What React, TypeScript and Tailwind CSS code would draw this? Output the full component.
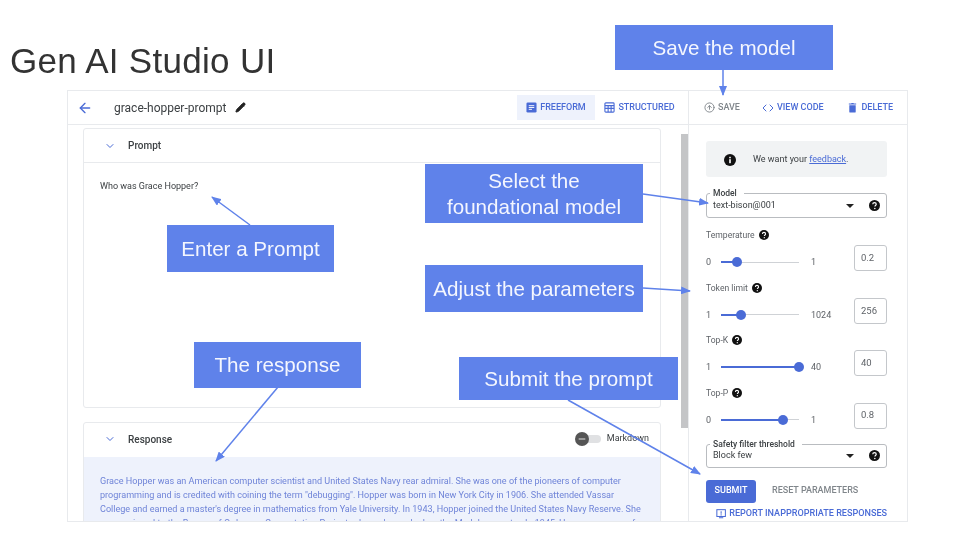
import { ArrowLeft, ChevronDown, Pencil, Code, CircleArrowUp, Minus } from "lucide-react";

const HelpIcon = ({ className = "", size = 11 }: { className?: string; size?: number }) => (
    <svg viewBox="0 0 24 24" width={size} height={size} className={className}>
        <circle cx="12" cy="12" r="12" fill="#111" />
        <path d="M8.2 9.4a3.8 3.8 0 0 1 7.6 0c0 2.6-3 2.6-3 5" fill="none" stroke="#fff" strokeWidth="2.6" />
        <circle cx="12.7" cy="18.4" r="1.6" fill="#fff" />
    </svg>
);

const InfoIcon = () => (
    <svg viewBox="0 0 24 24" width="12" height="12">
        <circle cx="12" cy="12" r="12" fill="#111" />
        <rect x="10.4" y="10.4" width="3.2" height="8" fill="#fff" />
        <rect x="10.4" y="5.6" width="3.2" height="3" fill="#fff" />
    </svg>
);

const FreeformIcon = () => (
    <svg viewBox="0 0 24 24" width="11" height="11">
        <rect x="1" y="1" width="22" height="22" rx="3" fill="#4a6bd6" />
        <path d="M6 8h12M6 12h12M6 16h7" stroke="#fff" strokeWidth="2" />
    </svg>
);

const TableIcon = () => (
    <svg viewBox="0 0 24 24" width="11" height="11" fill="none" stroke="#4a6bd6" strokeWidth="2.4">
        <rect x="2" y="2" width="20" height="20" rx="2" />
        <path d="M2 8h20M2 14h20M9 8v14M15.500 8v14" />
    </svg>
);

const TrashIcon = () => (
    <svg viewBox="0 0 24 24" width="11" height="11" fill="#4a6bd6">
        <path d="M5 7h14v14a2 2 0 0 1-2 2H7a2 2 0 0 1-2-2zM4 3h5l1-1h4l1 1h5v2.500H4z" />
    </svg>
);

const ReportIcon = () => (
    <svg viewBox="0 0 24 24" width="11" height="11" fill="none" stroke="#4a6bd6" strokeWidth="2.4">
        <rect x="2" y="3" width="20" height="16" />
        <path d="M12 6.500v6M12 14v2.500M7 22h10" />
    </svg>
);

const Caret = () => <div className="w-0 h-0 border-x-[4px] border-x-transparent border-t-[4px] border-t-[#222]" />;

const Param = ({ label, min, max, value, pct }: { label: string; min: string; max: string; value: string; pct: number }) => (
    <div className="flex flex-row items-end justify-between h-[52.4px]">
        <div className="flex flex-col gap-[15px] mb-[3px]">
            <div className="flex flex-row items-center gap-[4px] text-[8.6px] leading-[12px] text-[#5f6368]">
                {label}
                <HelpIcon size={10} />
            </div>
            <div className="flex flex-row items-center text-[9px] leading-[12px] text-[#5f6368]">
                <span className="w-[15px]">{min}</span>
                <div className="relative w-[78px] h-[1px] bg-[#cfd2d6]">
                    <div className="h-[2px] -mt-[0.5px] bg-[#4a6bd6]" style={{ width: `${pct}%` }} />
                    <div className="absolute -top-[4.5px] w-[10px] h-[10px] -ml-[5px] rounded-full bg-[#4a6bd6]" style={{ left: `${pct}%` }} />
                </div>
                <span className="ml-[12px]">{max}</span>
            </div>
        </div>
        <div className="w-[33px] h-[26px] flex items-center pl-[6px] border border-[#c4c7cb] rounded-[3px] text-[9.5px] text-[#5f6368]">
            {value}
        </div>
    </div>
);

const Select = ({ label, value, labelW, height }: { label: string; value: string; labelW: string; height: string }) => (
    <div className={`relative border border-[#b9bcc0] rounded-[3px] flex flex-row items-center pl-[6px] pr-[6px] text-[9px] text-[#3c4043] ${height}`}>
        <span className={`absolute -top-[6px] left-[3px] bg-white px-[3px] text-[8.5px] leading-[11px] font-medium text-[#3c4043] ${labelW}`}>{label}</span>
        <span className="flex-1">{value}</span>
        <Caret />
        <HelpIcon className="ml-[15px]" />
    </div>
);

const Callout = ({ className, children }: { className: string; children: React.ReactNode }) => (
    <div className={`absolute flex items-center justify-center text-center bg-[#5f82ea] text-[#f4f6fe] text-[20.6px] leading-[26px] font-['Liberation_Sans',sans-serif] ${className}`}>
        {children}
    </div>
);

const arrows = [
    { x1: 723, y1: 70, x2: 723, y2: 95 },
    { x1: 250, y1: 225, x2: 212, y2: 197 },
    { x1: 643, y1: 194, x2: 708, y2: 203 },
    { x1: 643, y1: 288, x2: 690, y2: 291 },
    { x1: 278, y1: 387, x2: 216, y2: 461 },
    { x1: 568, y1: 400, x2: 700, y2: 474 },
];

export default function App() {
    return (
        <div className="relative w-[960px] h-[540px] overflow-hidden bg-white blur-[0.35px] font-['Roboto',sans-serif]">
            <h1 className="pl-[10px] pt-[40px] h-[90px] text-[35px] leading-[42px] tracking-[0.3px] text-[#333] font-normal font-['Liberation_Sans',sans-serif]">Gen AI Studio UI</h1>

            <div className="ml-[67px] w-[841px] h-[432px] border border-[#e8eaed] flex flex-col overflow-hidden">
                {/* top bar */}
                <div className="h-[34px] shrink-0 flex flex-row border-b border-[#e8eaed]">
                    <div className="w-[621px] flex flex-row items-center pl-[9px] border-r border-[#e8eaed]">
                        <ArrowLeft size={16} className="text-[#4a6bd6]" />
                        <span className="ml-[21px] text-[12px] text-[#3c4043]">grace-hopper-prompt</span>
                        <Pencil size={11} className="ml-[9px] text-[#222] fill-[#222]" />
                        <div className="ml-auto h-[25px] w-[78px] bg-[#eef2fc] flex flex-row items-center justify-center gap-[3px] text-[9px] font-medium text-[#4a6bd6]">
                            <FreeformIcon />
                            FREEFORM
                        </div>
                        <div className="w-[89px] mr-[4px] flex flex-row items-center justify-center gap-[3px] text-[9px] font-medium text-[#4a6bd6]">
                            <TableIcon />
                            STRUCTURED
                        </div>
                    </div>
                    <div className="flex-1 flex flex-row items-center pl-[15px] pr-[14px] text-[9px] font-medium text-[#4a6bd6]">
                        <CircleArrowUp size={11} className="text-[#80868b] mr-[3px]" />
                        <span className="text-[#80868b]">SAVE</span>
                        <Code size={12} className="ml-[22px] mr-[3px]" />
                        VIEW CODE
                        <span className="ml-auto mr-[3px]"><TrashIcon /></span>
                        DELETE
                    </div>
                </div>

                <div className="flex-1 min-h-0 flex flex-row">
                    {/* prompt and response */}
                    <div className="relative w-[621px] border-r border-[#e8eaed] pl-[15px] pt-[3px] overflow-hidden">
                        <div className="w-[578px] h-[280px] border border-[#e8eaed] rounded-[3px]">
                            <div className="h-[34px] flex flex-row items-center pl-[20px] gap-[12px] border-b border-[#e8eaed] text-[10px] font-medium text-[#3c4043]">
                                <ChevronDown size={12} className="text-[#4a6bd6]" />
                                Prompt
                            </div>
                            <div className="pl-[16px] pt-[17px] text-[9px] leading-[12px] text-[#3c4043]">Who was Grace Hopper?</div>
                        </div>
                        <div className="mt-[14px] w-[578px] border border-[#e8eaed] rounded-[3px]">
                            <div className="h-[34px] pb-[2px] flex flex-row items-center pl-[20px] pr-[11px] gap-[12px] text-[10px] font-medium text-[#3c4043]">
                                <ChevronDown size={12} className="text-[#4a6bd6]" />
                                Response
                                <div className="ml-auto relative w-[24px] h-[8px] rounded-full bg-[#e0e1e3]">
                                    <div className="absolute -top-[3px] -left-[2px] w-[14px] h-[14px] rounded-full bg-[#555] flex items-center justify-center">
                                        <Minus size={10} className="text-white" />
                                    </div>
                                </div>
                                <span className="font-normal text-[9px] ml-[-6px]">Markdown</span>
                            </div>
                            <div className="bg-[#eef2fc] px-[16px] pt-[17px] h-[80px] text-[9.07px] leading-[14px] text-[#6f84d8]">
                                Grace Hopper was an American computer scientist and United States Navy rear admiral. She was one of the pioneers of computer programming and is credited with coining the term "debugging". Hopper was born in New York City in 1906. She attended Vassar College and earned a master's degree in mathematics from Yale University. In 1943, Hopper joined the United States Navy Reserve. She was assigned to the Bureau of Ordnance Computation Project, where she worked on the Mark I computer. In 1945, Hopper was one of
                            </div>
                        </div>
                        <div className="absolute top-[9px] right-0 w-[7px] h-[294px] bg-[#c4c5c7]" />
                    </div>

                    {/* parameters */}
                    <div className="flex-1 pl-[17px] pr-[20px] pt-[16px] overflow-hidden">
                        <div className="h-[36px] pt-[1px] rounded-[3px] bg-[#f1f3f4] flex flex-row items-center pl-[18px] gap-[17px] text-[9px] text-[#3c4043]">
                            <InfoIcon />
                            <span>We want your <span className="text-[#4a6bd6] underline">feedback</span>.</span>
                        </div>
                        <div className="mt-[16px]">
                            <Select label="Model" value="text-bison@001" labelW="w-[34px]" height="h-[25px]" />
                        </div>
                        <div className="mt-[1px]">
                            <Param label="Temperature" min="0" max="1" value="0.2" pct={20} />
                            <Param label="Token limit" min="1" max="1024" value="256" pct={25} />
                            <Param label="Top-K" min="1" max="40" value="40" pct={100} />
                            <Param label="Top-P" min="0" max="1" value="0.8" pct={80} />
                        </div>
                        <div className="mt-[15px]">
                            <Select label="Safety filter threshold" value="Block few" labelW="w-[92px]" height="h-[24px]" />
                        </div>
                        <div className="mt-[12px] flex flex-row items-center text-[9px] font-medium">
                            <div className="w-[50px] h-[23px] rounded-[3px] bg-[#4a6bd6] text-white flex items-center justify-center">SUBMIT</div>
                            <span className="ml-[16px] text-[#80868b]">RESET PARAMETERS</span>
                        </div>
                        <div className="mt-[4px] ml-[10px] flex flex-row items-center gap-[3px] text-[9.07px] font-medium text-[#4a6bd6] whitespace-nowrap">
                            <ReportIcon />
                            REPORT INAPPROPRIATE RESPONSES
                        </div>
                    </div>
                </div>
            </div>

            <svg width="960" height="540" className="absolute inset-0 pointer-events-none">
                <defs>
                    <marker id="head" markerWidth="10" markerHeight="8" refX="9" refY="4" orient="auto" markerUnits="userSpaceOnUse">
                        <path d="M0 0 L10 4 L0 8 Z" fill="#5f82ea" />
                    </marker>
                </defs>
                {arrows.map((a, i) => (
                    <line key={i} {...a} stroke="#5f82ea" strokeWidth="1.5" markerEnd="url(#head)" />
                ))}
            </svg>

            <Callout className="left-[615px] top-[25px] w-[218px] h-[45px]">Save the model</Callout>
            <Callout className="left-[425px] top-[164px] w-[218px] h-[59px]">Select the<br />foundational model</Callout>
            <Callout className="left-[167px] top-[225px] w-[167px] h-[47px]">Enter a Prompt</Callout>
            <Callout className="left-[425px] top-[265px] w-[218px] h-[47px]">Adjust the parameters</Callout>
            <Callout className="left-[194px] top-[342px] w-[167px] h-[46px]">The response</Callout>
            <Callout className="left-[459px] top-[357px] w-[219px] h-[43px]">Submit the prompt</Callout>
        </div>
    );
}
